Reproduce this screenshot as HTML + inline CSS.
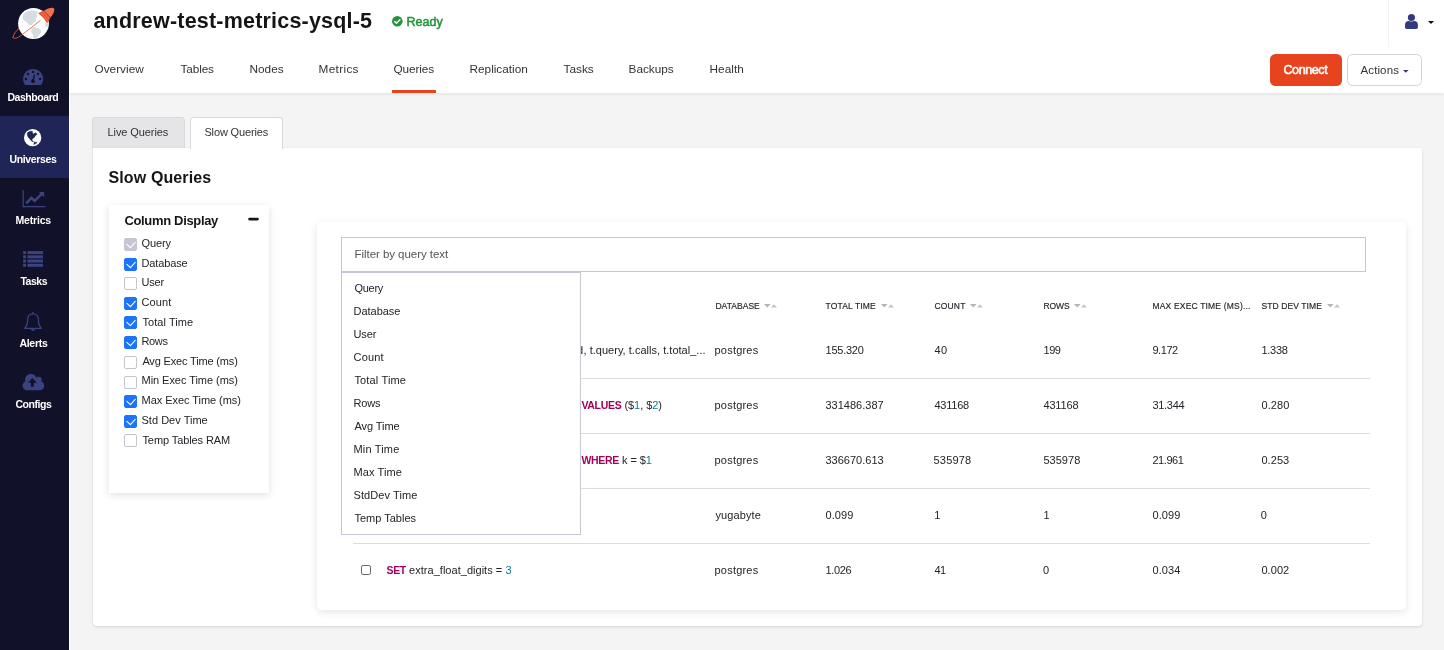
<!DOCTYPE html>
<html lang="en">
<head>
<meta charset="utf-8">
<title>andrew-test-metrics-ysql-5 - Slow Queries</title>
<style>
*{box-sizing:border-box;margin:0;padding:0}
html,body{width:1444px;height:650px;overflow:hidden}
body{background:#f4f4f4;font-family:"Liberation Sans",sans-serif;color:#232329;font-size:11px;position:relative}
#wrap{position:absolute;left:0;top:0;width:1444px;height:650px;will-change:transform}
.b{position:absolute}
.t{position:absolute;line-height:20px;height:20px;white-space:nowrap}
svg{position:absolute;overflow:visible}
#side{position:absolute;left:0;top:0;width:69px;height:650px;background:#12112a;z-index:10}
#side .active{position:absolute;left:0;top:116px;width:69px;height:62px;background:#202558}
#strip{position:absolute;left:69px;top:0;width:1px;height:650px;background:#fff}
#head{position:absolute;left:69px;top:0;width:1375px;height:93px;background:#fff;box-shadow:0 1px 4px rgba(0,0,0,.08)}
#uline{position:absolute;left:392px;top:90px;width:44px;height:3px;background:#e8431f}
#vdiv{position:absolute;left:1388px;top:0;width:1px;height:47px;background:#f3f3f3}
#connect-btn{position:absolute;left:1270px;top:54px;width:72px;height:32px;background:#e8431f;border-radius:5.5px}
#actions-btn{position:absolute;left:1347px;top:54px;width:75px;height:32px;background:#fff;border:1px solid #d3d3d3;border-radius:5.5px}
.tabbox{position:absolute;top:117px;height:32px;border:1px solid #dadadd;border-bottom:none;border-radius:4px 4px 0 0}
#panel{position:absolute;left:93px;top:148px;width:1329px;height:478px;background:#fff;box-shadow:0 1px 3px rgba(0,0,0,.14);border-radius:0 2px 4px 4px}
#cd{position:absolute;left:109px;top:204.5px;width:160px;height:288px;background:#fff;box-shadow:0 2px 8px rgba(0,0,0,.12)}
.ck{position:absolute;left:124px;width:13px;height:13px;border:1px solid #c4c4cc;border-radius:2px;background:#fff}
.ck.on{background:#1c74fd;border-color:#1c74fd}
.ck.dis{background:#c6c5d3;border-color:#c6c5d3}
.ck svg{left:-1px;top:-1px}
#tc{position:absolute;left:317px;top:221.5px;width:1089px;height:388px;background:#fff;box-shadow:0 2px 8px rgba(0,0,0,.11);border-radius:5px}
#inp{position:absolute;left:341px;top:237px;width:1024.5px;height:34.6px;border:1px solid #c6c6d6;background:#fff}
#dd{position:absolute;left:341px;top:271.6px;width:240px;height:263.4px;border:1px solid #c6c6d6;background:#fff;z-index:5}
.sep{position:absolute;left:353px;width:1016.5px;height:1px;background:#dcdce6}
#rowck{position:absolute;left:361px;top:565px;width:10.4px;height:10.4px;border:1px solid #666;border-radius:2.2px;background:#fff}
.qr{position:absolute;height:20px;line-height:20px;white-space:nowrap;text-align:right;font-size:11px}
.kw{color:#a3005c;font-weight:bold;font-size:10.5px;letter-spacing:-0.3px}
.nm{color:#0b7a83}
</style>
</head>
<body>
<div id="wrap">
<aside id="side">
  <div class="active"></div>
  <!-- logo -->
  <svg id="logo" style="left:0;top:0" width="69" height="50" viewBox="0 0 69 50">
    <path d="M13 37.600 C13.300 34.500 16 31 19 28.300" fill="none" stroke="#ea5a37" stroke-width="0.900"/>
    <circle cx="33.5" cy="23.5" r="15.4" fill="#fff"/>
    <g fill="#d5dde2" stroke="#d5dde2" stroke-width="1" stroke-linejoin="round">
      <path d="M22.800 17 L24.300 13.800 L27.700 11.600 L31 10.900 L35 11.200 L37.500 12.500 L35.800 14.500 L37 16.500 L34.800 18.500 L36 20.800 L33.500 22.300 L31 24.800 L28.700 24.200 L27.200 21.500 L24.300 20.300 Z"/>
      <path d="M32 28.300 L35 27.500 L38.800 28.900 L40.800 31.200 L39.200 34.300 L36.800 37.300 L33.900 37.900 L33.400 35 L31.700 31.500 Z"/>
      <path d="M45.500 23 L47.600 23.500 L48.100 25.800 L46.500 26.500 L45.400 25 Z"/>
    </g>
    <path d="M13 37.400 C13.100 39.700 17.500 38.400 23 34 C29 29.200 35 24.900 40.200 20.600" fill="none" stroke="#ea5a37" stroke-width="0.850" stroke-linecap="round"/>
    <g transform="translate(48.100 13.400) rotate(-42) scale(1.07)">
      <path d="M-6.850 -6.200 Q-4 -5.600 -1 -4.400 L-1 4.400 Q-4 5.600 -6.850 6.200 Q-5.500 0 -6.850 -6.200 Z" fill="#e8502f"/>
      <path d="M-4.900 -5.500 Q-3.800 0 -4.900 5.500 M-2.900 -4.900 Q-2 0 -2.900 4.900" fill="none" stroke="#f08264" stroke-width="0.600"/>
      <path d="M-1 -4.400 Q4.500 -3.800 6.850 -1 Q7.400 0 6.850 1 Q4.500 3.800 -1 4.400 Z" fill="#f0714f"/>
    </g>
  </svg>
  <!-- dashboard -->
  <svg style="left:22.900px;top:68.700px" width="20.200" height="15.900" viewBox="0 0 20.200 15.900">
    <path d="M1.500 15.300 A10.100 10.100 0 1 1 18.700 15.300 Q18.400 15.900 17.800 15.900 H2.400 Q1.800 15.900 1.500 15.300 Z" fill="#3a427f"/>
    <g fill="#12112a"><circle cx="2.900" cy="10" r="1.200"/><circle cx="5.100" cy="5" r="1.200"/><circle cx="10" cy="2.900" r="1.200"/><circle cx="15" cy="5" r="1.200"/><circle cx="17.100" cy="10" r="1.200"/>
    <circle cx="10" cy="12.200" r="1.900"/><path d="M9.300 12 L10.900 5.500 L12.100 5.800 L10.700 12.400Z"/></g>
  </svg>
  <!-- universes -->
  <svg style="left:24.100px;top:128.900px" width="17.300" height="17.300" viewBox="0 0 17.500 17.500">
    <circle cx="8.750" cy="8.750" r="8.750" fill="#fff"/>
    <g fill="#202558" stroke="#202558" stroke-width="0.500" stroke-linejoin="round">
    <path d="M3.200 4.400 L4.300 3.100 L6.400 2.400 L8.400 2.300 L8.600 3.900 L9.700 5.200 L10.500 4.400 L11.600 3.900 L13.300 5.400 L11.600 6.500 L10.700 8 L9.500 9.300 L8.400 10 L7.900 11.300 L9.700 12.600 L9.200 13 L7.300 11.900 L5.600 9.800 L4.100 8 L3.400 6.100 Z"/>
    <path d="M10.500 13.200 L13.300 13.600 L11.600 14.900 L9.900 15.700 Z"/>
    </g>
  </svg>
  <!-- metrics -->
  <svg style="left:0;top:0" width="69" height="650" viewBox="0 0 69 650">
    <path d="M23.200 190.200 V206.700 H45.400" fill="none" stroke="#3a427f" stroke-width="1.300"/>
    <path d="M26.200 203.300 L31.400 197.800 L34.600 201 L41.400 194.400" fill="none" stroke="#3a427f" stroke-width="2.600"/>
    <path d="M38.700 191.900 L44.100 191.900 L44.100 197.200Z" fill="#3a427f"/>
    <!-- tasks -->
    <g fill="#3a427f">
      <rect x="23.100" y="251.100" width="2.900" height="3"/><rect x="27.400" y="251.100" width="15.600" height="3"/>
      <rect x="23.100" y="255.330" width="2.900" height="3"/><rect x="27.400" y="255.330" width="15.600" height="3"/>
      <rect x="23.100" y="259.560" width="2.900" height="3"/><rect x="27.400" y="259.560" width="15.600" height="3"/>
      <rect x="23.100" y="263.800" width="2.900" height="3"/><rect x="27.400" y="263.800" width="15.600" height="3"/>
    </g>
    <!-- alerts -->
    <g fill="none" stroke="#3a427f" stroke-width="1.300" stroke-linejoin="round" stroke-linecap="round">
      <path d="M33 312.500 V313.800"/>
      <path d="M33 313.800 C29.300 313.800 27.600 316.600 27.600 319.800 C27.600 323.200 26.900 326.200 24.700 328.300 H41.300 C39.100 326.200 38.400 323.200 38.400 319.800 C38.400 316.600 36.700 313.800 33 313.800 Z"/>
      <path d="M30.800 329 A2.400 2.600 0 0 0 35.200 329 Z" fill="#3a427f" fill-opacity="0.700" stroke-width="1"/>
    </g>
    <!-- configs -->
    <g fill="#3a427f">
      <rect x="22.500" y="381.100" width="21.700" height="9.100" rx="4.500"/><circle cx="30.900" cy="379.700" r="5.900"/><circle cx="38.800" cy="379.700" r="2.900"/>
      <rect x="31" y="379.200" width="9.500" height="4"/>
    </g>
    <path d="M32.400 378.100 L28.100 382.800 H30.900 V386.800 H33.900 V382.800 H36.900 Z" fill="#12112a"/>
  </svg>
  <div class="t" id="sl0" style="left:7.44px;top:87px;font-size:10.5px;font-weight:bold;color:#fff;letter-spacing:-0.45px;">Dashboard</div>
<div class="t" id="sl1" style="left:9.46px;top:149px;font-size:10.5px;font-weight:bold;color:#fff;letter-spacing:-0.36px;">Universes</div>
<div class="t" id="sl2" style="left:15.47px;top:210px;font-size:10.5px;font-weight:bold;color:#fff;letter-spacing:-0.17px;">Metrics</div>
<div class="t" id="sl3" style="left:20.38px;top:271px;font-size:10.5px;font-weight:bold;color:#fff;letter-spacing:-0.45px;">Tasks</div>
<div class="t" id="sl4" style="left:19.44px;top:333px;font-size:10.5px;font-weight:bold;color:#fff;letter-spacing:-0.29px;">Alerts</div>
<div class="t" id="sl5" style="left:15.41px;top:394px;font-size:10.5px;font-weight:bold;color:#fff;letter-spacing:-0.43px;">Configs</div>
</aside>
<div id="strip"></div>
<header id="head"></header>
<div id="hdr-content">
  <div class="t" id="title" style="left:93.44px;top:11px;font-size:21.5px;font-weight:bold;color:#151515;letter-spacing:0.20px;">andrew-test-metrics-ysql-5</div>
  <svg style="left:391.700px;top:15.700px" width="10.600" height="10.600" viewBox="0 0 10.600 10.600"><circle cx="5.300" cy="5.300" r="5.300" fill="#22933a"/><path d="M2.700 5.500 L4.500 7.300 L7.900 3.700" fill="none" stroke="#fff" stroke-width="1.500" stroke-linecap="round" stroke-linejoin="round"/></svg>
  <div class="t" id="ready" style="left:406.55px;top:12px;font-size:12.5px;color:#22933a;letter-spacing:0.02px;-webkit-text-stroke:0.5px #22933a;">Ready</div>
  <nav>
  <div class="t" id="nav0" style="left:94.45px;top:59px;font-size:11.8px;color:#333;letter-spacing:0.03px;">Overview</div>
<div class="t" id="nav1" style="left:180.45px;top:59px;font-size:11.8px;color:#333;letter-spacing:-0.11px;">Tables</div>
<div class="t" id="nav2" style="left:249.48px;top:59px;font-size:11.8px;color:#333;letter-spacing:0.02px;">Nodes</div>
<div class="t" id="nav3" style="left:318.54px;top:59px;font-size:11.8px;color:#333;letter-spacing:0.33px;">Metrics</div>
<div class="t" id="nav4" style="left:393.52px;top:59px;font-size:11.8px;color:#333;letter-spacing:-0.12px;">Queries</div>
<div class="t" id="nav5" style="left:469.54px;top:59px;font-size:11.8px;color:#333;letter-spacing:-0.01px;">Replication</div>
<div class="t" id="nav6" style="left:563.47px;top:59px;font-size:11.8px;color:#333;letter-spacing:0.02px;">Tasks</div>
<div class="t" id="nav7" style="left:628.55px;top:59px;font-size:11.8px;color:#333;letter-spacing:-0.01px;">Backups</div>
<div class="t" id="nav8" style="left:709.48px;top:59px;font-size:11.8px;color:#333;letter-spacing:0.07px;">Health</div>
  </nav>
  <div id="uline" class="b"></div>
  <div id="vdiv" class="b"></div>
  <svg style="left:1405.200px;top:14px" width="13" height="15.200" viewBox="0 0 13 15.200"><path d="M0 12.800 V11 Q0 7 4 6.900 H9 Q12.900 7 12.900 11 V13.300 Q12.900 15.100 11.100 15.100 H1.800 Q0 15.100 0 13.300 Z" fill="#343b7d"/><circle cx="6.450" cy="3.500" r="3.900" fill="#fff"/><circle cx="6.450" cy="3.500" r="3.600" fill="#343b7d"/></svg>
  <svg style="left:1427.900px;top:20.900px" width="6" height="3.100" viewBox="0 0 6 3.100"><path d="M0 0 H6 L3 3.100Z" fill="#0a0a1a"/></svg>
  <div id="connect-btn"></div>
  <div class="t" id="connect" style="left:1283.43px;top:60px;font-size:12.5px;color:#fff;letter-spacing:-0.38px;-webkit-text-stroke:0.55px #fff;">Connect</div>
  <div id="actions-btn"></div>
  <div class="t" id="actions" style="left:1360.48px;top:60px;font-size:11.5px;color:#333;letter-spacing:0.12px;">Actions</div>
  <svg style="left:1403px;top:70px" width="5.600" height="2.800" viewBox="0 0 5.600 2.800"><path d="M0 0 H5.600 L2.800 2.800Z" fill="#2f3a80"/></svg>
</div>
<div class="tabbox" style="left:92px;width:92.500px;background:#e5e5e7"></div>
<div class="tabbox" style="left:190px;width:92.500px;background:#fff;z-index:2"></div>
<main id="panel"></main>
<div id="content">
  <div style="position:absolute;z-index:3;left:0;top:0">
  <div class="t" id="tab0" style="left:107.54px;top:122px;font-size:11px;color:#333;letter-spacing:-0.09px;">Live Queries</div>
<div class="t" id="tab1" style="left:204.44px;top:122px;font-size:11px;color:#333;letter-spacing:-0.15px;">Slow Queries</div>
  </div>
  <div class="t" id="h2" style="left:108.53px;top:168px;font-size:16px;font-weight:bold;color:#151515;letter-spacing:0.12px;">Slow Queries</div>
  <section id="cd"></section>
  <div class="t" id="cdh" style="left:124.41px;top:211px;font-size:13px;font-weight:bold;color:#151515;letter-spacing:-0.33px;">Column Display</div>
  <svg id="minus" style="left:248px;top:217px" width="11" height="4" viewBox="0 0 11 4"><rect x="0.200" y="0.700" width="10.600" height="2.700" rx="1.300" fill="#151515"/></svg>
  <div class="ck dis" style="top:238px"><svg width="13" height="13" viewBox="0 0 13 13"><path d="M2.900 6.300 L6.400 9.600 L11.200 4.400" fill="none" stroke="#fff" stroke-width="1.100" stroke-linecap="round" stroke-linejoin="round"/></svg></div>
  <div class="ck on" style="top:258px"><svg width="13" height="13" viewBox="0 0 13 13"><path d="M2.900 6.300 L6.400 9.600 L11.200 4.400" fill="none" stroke="#fff" stroke-width="1.100" stroke-linecap="round" stroke-linejoin="round"/></svg></div>
  <div class="ck " style="top:277px"></div>
  <div class="ck on" style="top:297px"><svg width="13" height="13" viewBox="0 0 13 13"><path d="M2.900 6.300 L6.400 9.600 L11.200 4.400" fill="none" stroke="#fff" stroke-width="1.100" stroke-linecap="round" stroke-linejoin="round"/></svg></div>
  <div class="ck on" style="top:316px"><svg width="13" height="13" viewBox="0 0 13 13"><path d="M2.900 6.300 L6.400 9.600 L11.200 4.400" fill="none" stroke="#fff" stroke-width="1.100" stroke-linecap="round" stroke-linejoin="round"/></svg></div>
  <div class="ck on" style="top:336px"><svg width="13" height="13" viewBox="0 0 13 13"><path d="M2.900 6.300 L6.400 9.600 L11.200 4.400" fill="none" stroke="#fff" stroke-width="1.100" stroke-linecap="round" stroke-linejoin="round"/></svg></div>
  <div class="ck " style="top:356px"></div>
  <div class="ck " style="top:376px"></div>
  <div class="ck on" style="top:395px"><svg width="13" height="13" viewBox="0 0 13 13"><path d="M2.900 6.300 L6.400 9.600 L11.200 4.400" fill="none" stroke="#fff" stroke-width="1.100" stroke-linecap="round" stroke-linejoin="round"/></svg></div>
  <div class="ck on" style="top:415px"><svg width="13" height="13" viewBox="0 0 13 13"><path d="M2.900 6.300 L6.400 9.600 L11.200 4.400" fill="none" stroke="#fff" stroke-width="1.100" stroke-linecap="round" stroke-linejoin="round"/></svg></div>
  <div class="ck " style="top:434px"></div>
  
  <div class="t" id="cl0" style="left:141.49px;top:233px;font-size:11px;letter-spacing:-0.11px;">Query</div>
<div class="t" id="cl1" style="left:141.49px;top:253px;font-size:11px;letter-spacing:-0.13px;">Database</div>
<div class="t" id="cl2" style="left:141.49px;top:272px;font-size:11px;letter-spacing:-0.18px;">User</div>
<div class="t" id="cl3" style="left:141.49px;top:292px;font-size:11px;letter-spacing:0.11px;">Count</div>
<div class="t" id="cl4" style="left:142.44px;top:312px;font-size:11px;letter-spacing:0.06px;">Total Time</div>
<div class="t" id="cl5" style="left:141.54px;top:331px;font-size:11px;letter-spacing:-0.36px;">Rows</div>
<div class="t" id="cl6" style="left:142.39px;top:351px;font-size:11px;letter-spacing:-0.16px;">Avg Exec Time (ms)</div>
<div class="t" id="cl7" style="left:141.54px;top:370px;font-size:11px;letter-spacing:-0.05px;">Min Exec Time (ms)</div>
<div class="t" id="cl8" style="left:141.54px;top:390px;font-size:11px;letter-spacing:-0.05px;">Max Exec Time (ms)</div>
<div class="t" id="cl9" style="left:141.49px;top:410px;font-size:11px;letter-spacing:0.02px;">Std Dev Time</div>
<div class="t" id="cl10" style="left:142.44px;top:430px;font-size:11px;letter-spacing:-0.09px;">Temp Tables RAM</div>
  <section id="tc"></section>
  <div id="inp"></div>
  <div class="t" id="ph" style="left:354.53px;top:244px;font-size:11.5px;color:#555;letter-spacing:-0.05px;">Filter by query text</div>
  <div id="dd"></div>
  <div class="t" id="dd0" style="left:354.43px;top:278px;font-size:11px;letter-spacing:-0.27px;z-index:6;">Query</div>
<div class="t" id="dd1" style="left:353.53px;top:301px;font-size:11px;letter-spacing:-0.03px;z-index:6;">Database</div>
<div class="t" id="dd2" style="left:353.53px;top:324px;font-size:11px;letter-spacing:-0.15px;z-index:6;">User</div>
<div class="t" id="dd3" style="left:353.53px;top:347px;font-size:11px;letter-spacing:0.18px;z-index:6;">Count</div>
<div class="t" id="dd4" style="left:354.43px;top:370px;font-size:11px;letter-spacing:0.15px;z-index:6;">Total Time</div>
<div class="t" id="dd5" style="left:353.53px;top:393px;font-size:11px;letter-spacing:-0.15px;z-index:6;">Rows</div>
<div class="t" id="dd6" style="left:354.43px;top:416px;font-size:11px;letter-spacing:-0.06px;z-index:6;">Avg Time</div>
<div class="t" id="dd7" style="left:353.53px;top:439px;font-size:11px;letter-spacing:0.17px;z-index:6;">Min Time</div>
<div class="t" id="dd8" style="left:353.53px;top:462px;font-size:11px;letter-spacing:0.10px;z-index:6;">Max Time</div>
<div class="t" id="dd9" style="left:353.53px;top:485px;font-size:11px;letter-spacing:0.09px;z-index:6;">StdDev Time</div>
<div class="t" id="dd10" style="left:354.43px;top:508px;font-size:11px;letter-spacing:0.01px;z-index:6;">Temp Tables</div>
  <div class="t" id="th0" style="left:715.43px;top:296px;font-size:8.5px;letter-spacing:0.04px;-webkit-text-stroke:0.15px #232329;">DATABASE</div>
<div class="t" id="th1" style="left:825.45px;top:296px;font-size:8.5px;letter-spacing:0.16px;-webkit-text-stroke:0.15px #232329;">TOTAL TIME</div>
<div class="t" id="th2" style="left:934.42px;top:296px;font-size:8.5px;letter-spacing:0.18px;-webkit-text-stroke:0.15px #232329;">COUNT</div>
<div class="t" id="th3" style="left:1043.44px;top:296px;font-size:8.5px;letter-spacing:-0.09px;-webkit-text-stroke:0.15px #232329;">ROWS</div>
<div class="t" id="th4" style="left:1152.44px;top:296px;font-size:8.5px;letter-spacing:0.18px;-webkit-text-stroke:0.15px #232329;">MAX EXEC TIME (MS)...</div>
<div class="t" id="th5" style="left:1261.43px;top:296px;font-size:8.5px;letter-spacing:0.10px;-webkit-text-stroke:0.15px #232329;">STD DEV TIME</div>
  <svg style="left:764.2px;top:303.800px" width="13" height="3.400" viewBox="0 0 13 3.400"><path d="M0 0 H6.600 L3.300 3.400Z" fill="#b4b4b4"/><path d="M7 3.400 H13 L10 0.200Z" fill="#c4c4c4"/></svg>
  <svg style="left:881.3px;top:303.800px" width="13" height="3.400" viewBox="0 0 13 3.400"><path d="M0 0 H6.600 L3.300 3.400Z" fill="#b4b4b4"/><path d="M7 3.400 H13 L10 0.200Z" fill="#c4c4c4"/></svg>
  <svg style="left:970.3px;top:303.800px" width="13" height="3.400" viewBox="0 0 13 3.400"><path d="M0 0 H6.600 L3.300 3.400Z" fill="#b4b4b4"/><path d="M7 3.400 H13 L10 0.200Z" fill="#c4c4c4"/></svg>
  <svg style="left:1074.3px;top:303.800px" width="13" height="3.400" viewBox="0 0 13 3.400"><path d="M0 0 H6.600 L3.300 3.400Z" fill="#b4b4b4"/><path d="M7 3.400 H13 L10 0.200Z" fill="#c4c4c4"/></svg>
  <svg style="left:1327.0px;top:303.800px" width="13" height="3.400" viewBox="0 0 13 3.400"><path d="M0 0 H6.600 L3.300 3.400Z" fill="#b4b4b4"/><path d="M7 3.400 H13 L10 0.200Z" fill="#c4c4c4"/></svg>
  
  <div class="qr" style="left:341px;width:242.200px;top:340px">SELECT t.queryid</div>
  <div class="qr" style="left:341px;width:237px;top:395px"><span class="kw">INSERT INTO</span> sbtest1 (k, v)</div>
  <div class="qr" style="left:341px;width:237px;top:450px"><span class="kw">SELECT</span> v <span class="kw">FROM</span> sbtest1</div>
  <div class="qr" style="left:386px;width:150px;top:505px;text-align:left"><span class="kw">SELECT</span> version()</div>
  <div class="t" id="r0c0" style="left:714.53px;top:340px;font-size:11px;letter-spacing:0.21px;">postgres</div>
<div class="t" id="r0c1" style="left:825.51px;top:340px;font-size:11px;letter-spacing:-0.24px;">155.320</div>
<div class="t" id="r0c2" style="left:934.42px;top:340px;font-size:11px;letter-spacing:0.50px;">40</div>
<div class="t" id="r0c3" style="left:1043.50px;top:340px;font-size:11px;letter-spacing:-0.45px;">199</div>
<div class="t" id="r0c4" style="left:1152.44px;top:340px;font-size:11px;letter-spacing:-0.45px;">9.172</div>
<div class="t" id="r0c5" style="left:1261.49px;top:340px;font-size:11px;letter-spacing:-0.29px;">1.338</div>
<div class="t" id="r1c0" style="left:714.53px;top:395px;font-size:11px;letter-spacing:0.21px;">postgres</div>
<div class="t" id="r1c1" style="left:825.45px;top:395px;font-size:11px;letter-spacing:0.01px;">331486.387</div>
<div class="t" id="r1c2" style="left:934.42px;top:395px;font-size:11px;letter-spacing:-0.22px;">431168</div>
<div class="t" id="r1c3" style="left:1043.44px;top:395px;font-size:11px;letter-spacing:-0.16px;">431168</div>
<div class="t" id="r1c4" style="left:1152.44px;top:395px;font-size:11px;letter-spacing:-0.29px;">31.344</div>
<div class="t" id="r1c5" style="left:1261.43px;top:395px;font-size:11px;letter-spacing:0.09px;">0.280</div>
<div class="t" id="r2c0" style="left:714.53px;top:450px;font-size:11px;letter-spacing:0.21px;">postgres</div>
<div class="t" id="r2c1" style="left:825.45px;top:450px;font-size:11px;letter-spacing:0.01px;">336670.613</div>
<div class="t" id="r2c2" style="left:933.52px;top:450px;font-size:11px;letter-spacing:0.20px;">535978</div>
<div class="t" id="r2c3" style="left:1043.44px;top:450px;font-size:11px;letter-spacing:0.02px;">535978</div>
<div class="t" id="r2c4" style="left:1152.44px;top:450px;font-size:11px;letter-spacing:-0.45px;">21.961</div>
<div class="t" id="r2c5" style="left:1261.43px;top:450px;font-size:11px;letter-spacing:0.07px;">0.253</div>
<div class="t" id="r3c0" style="left:715.43px;top:505px;font-size:11px;letter-spacing:0.10px;">yugabyte</div>
<div class="t" id="r3c1" style="left:825.45px;top:505px;font-size:11px;letter-spacing:0.11px;">0.099</div>
<div class="t" id="r3c2" style="left:934.30px;top:505px;font-size:11px;">1</div>
<div class="t" id="r3c3" style="left:1043.50px;top:505px;font-size:11px;">1</div>
<div class="t" id="r3c4" style="left:1152.44px;top:505px;font-size:11px;letter-spacing:0.09px;">0.099</div>
<div class="t" id="r3c5" style="left:1260.80px;top:505px;font-size:11px;">0</div>
<div class="t" id="r4c0" style="left:714.53px;top:560px;font-size:11px;letter-spacing:0.21px;">postgres</div>
<div class="t" id="r4c1" style="left:825.51px;top:560px;font-size:11px;letter-spacing:-0.34px;">1.026</div>
<div class="t" id="r4c2" style="left:934.42px;top:560px;font-size:11px;letter-spacing:-0.45px;">41</div>
<div class="t" id="r4c3" style="left:1042.90px;top:560px;font-size:11px;">0</div>
<div class="t" id="r4c4" style="left:1152.44px;top:560px;font-size:11px;letter-spacing:0.09px;">0.034</div>
<div class="t" id="r4c5" style="left:1261.43px;top:560px;font-size:11px;letter-spacing:0.07px;">0.002</div>
<div class="t" id="q4" style="left:386.43px;top:560px;font-size:11px;letter-spacing:0.03px;"><span style="color:#a3005c;font-weight:bold;font-size:10.5px;letter-spacing:-0.3px">SET</span> extra_float_digits = <span style="color:#0b7a83">3</span></div>
<div class="t" id="q0" style="left:583.52px;top:340px;font-size:11px;letter-spacing:0.02px;">, t.query, t.calls, t.total_...</div>
<div class="t" id="q1" style="left:581.42px;top:395px;font-size:11px;letter-spacing:-0.05px;"><span style="color:#a3005c;font-weight:bold;font-size:10.5px;letter-spacing:-0.3px">VALUES</span> ($<span style="color:#0b7a83">1</span>, $<span style="color:#0b7a83">2</span>)</div>
<div class="t" id="q2" style="left:581.42px;top:450px;font-size:11px;letter-spacing:-0.07px;"><span style="color:#a3005c;font-weight:bold;font-size:10.5px;letter-spacing:-0.3px">WHERE</span> k = $<span style="color:#0b7a83">1</span></div>
  <div class="sep" style="top:378px"></div>
  <div class="sep" style="top:433px"></div>
  <div class="sep" style="top:488px"></div>
  <div class="sep" style="top:543px"></div>
  
  <div id="rowck"></div>
</div>
</div>
</body>
</html>
